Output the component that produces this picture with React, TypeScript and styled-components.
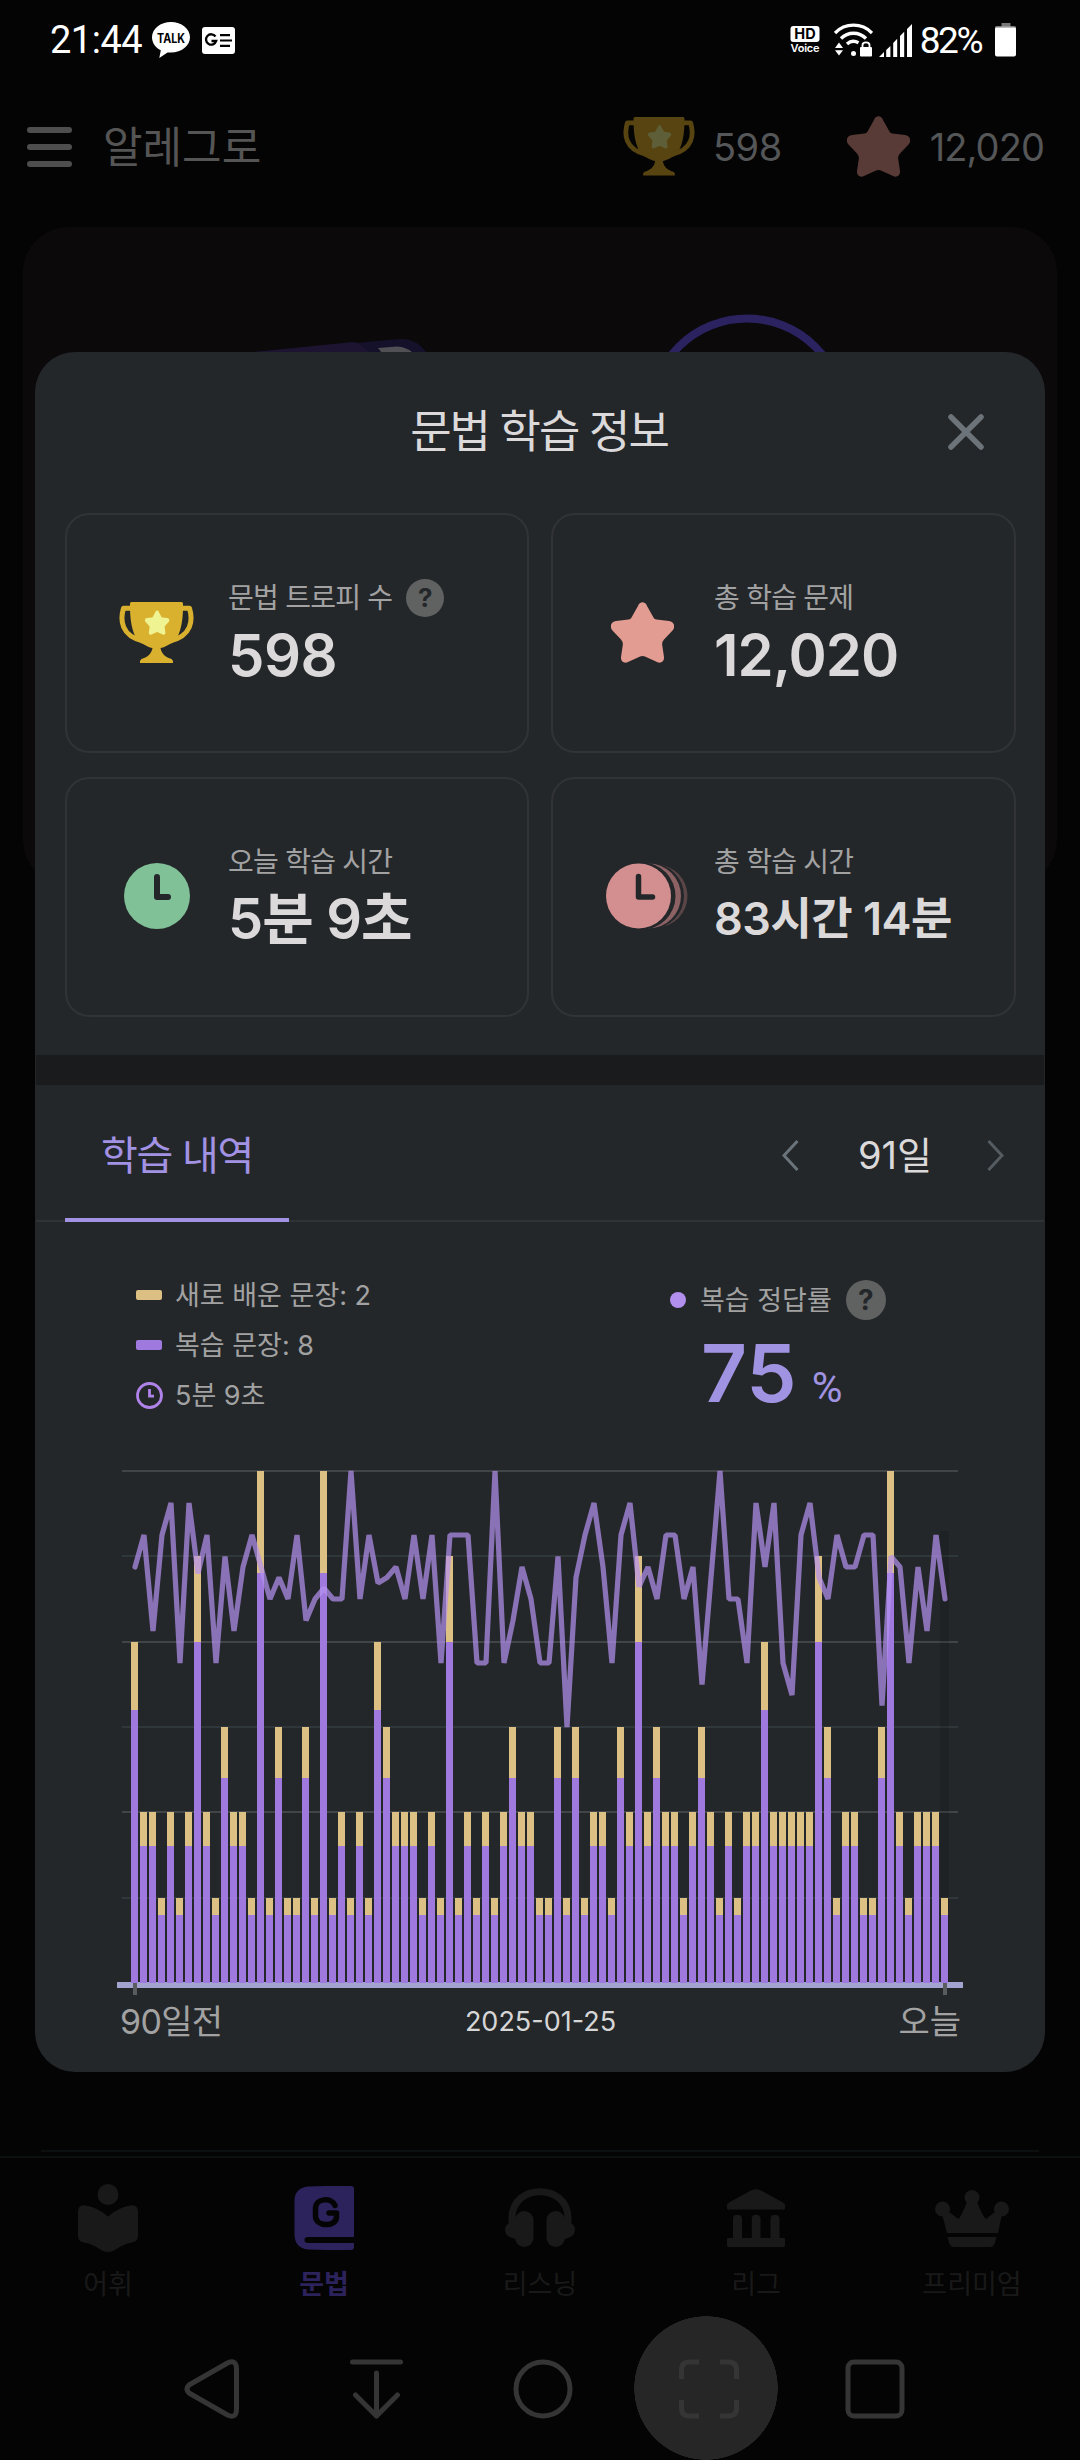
import React from 'react';
import styled, { createGlobalStyle } from 'styled-components';

const Global = createGlobalStyle`
  html, body { margin: 0; padding: 0; background: #040404; }
  * { box-sizing: border-box; }
  svg { display: block; flex: none; }
`;

const Screen = styled.div`
  position: relative;
  width: 1080px;
  height: 2460px;
  overflow: hidden;
  display: flex;
  flex-direction: column;
  background: #040404;
  font-family: Inter, 'Noto Sans CJK KR', sans-serif;
`;

/* A run of text; size, weight, colour and tracking vary between uses. */
const Label = styled.span<{ $size: number; $color: string; $weight?: number; $track?: number; $line?: number; $roboto?: boolean }>`
  font-size: ${p => p.$size}px;
  color: ${p => p.$color};
  font-weight: ${p => p.$weight ?? 400};
  letter-spacing: ${p => p.$track ?? 0}px;
  line-height: ${p => (p.$line ? `${p.$line}px` : 1)};
  white-space: nowrap;
  ${p => (p.$roboto ? "font-family: Roboto, 'Noto Sans CJK KR', sans-serif;" : '')}
`;

/* ---------- status bar ---------- */

const StatusBar = styled.div`
  height: 80px;
  padding: 0 64px 0 50px;
  display: flex;
  justify-content: space-between;
`;
const StatusGroup = styled.div`
  display: flex;
  align-items: center;
  height: 80px;
`;
const Spacer = styled.div<{ $w: number }>`
  width: ${p => p.$w}px;
  flex: none;
`;

const TalkIcon = () => (
  <svg width="38" height="36" viewBox="0 0 38 36">
    <path d="M19 0C8.5 0 0 6.8 0 15.3 0 21 3.6 25.700 8.800 28.300L7.300 36 15.500 30.400 19 30.600C29.500 30.600 38 23.800 38 15.300S29.500 0 19 0Z" fill="#fff" />
    <text x="19" y="20.500" fontSize="13" fontWeight="700" fontFamily="Inter" textAnchor="middle" textLength="28" lengthAdjust="spacingAndGlyphs" fill="#000">TALK</text>
  </svg>
);
const NewsIcon = () => (
  <svg width="33" height="27" viewBox="0 0 33 27">
    <rect width="33" height="27" rx="3" fill="#fff" />
    <path d="M13.500 9.500A5.200 5.200 0 1 0 14.200 14H9.500" fill="none" stroke="#000" strokeWidth="2.300" />
    <path d="M18 8.200H28M18 13.500H30M18 18.800H28" stroke="#000" strokeWidth="2.200" />
  </svg>
);
const HdVoiceIcon = () => (
  <svg width="30" height="28" viewBox="0 0 30 28">
    <rect x="0.500" y="0" width="29" height="16" rx="3" fill="#fff" />
    <text x="15" y="13.300" fontSize="14.500" fontWeight="700" fontFamily="Inter" textAnchor="middle" fill="#000">HD</text>
    <text x="15" y="26" fontSize="11" fontWeight="600" fontFamily="Inter" textAnchor="middle" textLength="29" fill="#fff">Voice</text>
  </svg>
);
const WifiIcon = () => (
  <svg width="39" height="34" viewBox="0 0 39 34" fill="none" stroke="#fff" strokeWidth="3.300">
    <path d="M1 10C11-0.500 28-0.500 38 10" />
    <path d="M7 15.500C14 8.500 25 8.500 32 15.500" />
    <path d="M13 21C16.500 17.700 20.500 17.500 24.500 19.700" />
    <circle cx="19.500" cy="30.500" r="2.500" fill="#fff" stroke="none" />
    <path d="M5 19.500L9 25H1ZM5 32.500L9 27.200H1Z" fill="#fff" stroke="none" />
    <rect x="26" y="24" width="12" height="9.500" rx="1" fill="#fff" stroke="none" />
    <path d="M28.500 25V22C28.500 18.500 35.500 18.500 35.500 22V25" strokeWidth="1.800" />
  </svg>
);
const SignalIcon = () => (
  <svg width="33" height="33" viewBox="0 0 33 33" fill="#fff">
    <path d="M0 33L5 28V33ZM7.200 26L11.400 22V33H7.200ZM14.200 19L18.200 14.800V33H14.200ZM21 12L25.200 7.800V33H21ZM28 5L33 0V33H28Z" />
  </svg>
);
const BatteryIcon = () => (
  <svg width="21" height="34" viewBox="0 0 21 34">
    <rect x="6.500" y="0" width="9" height="5" fill="#777" />
    <rect x="0" y="3.500" width="21" height="30" rx="2" fill="#fff" />
    <rect x="0" y="3.500" width="21" height="1" fill="#777" />
  </svg>
);

/* ---------- shared drawings ---------- */

const STAR =
  'M27 4C28.500-1 34.500-1 36 4L42.500 15.500Q43.300 17.300 45.500 17.600L58 19C63 19.500 65 25 61.500 28.500L53 37.500Q50.800 40 51.200 43L53 55C53.500 59.500 49.500 62 46 60L34.500 54.700Q31.500 53.300 28.500 54.700L17 60C13.500 62 9.500 59.500 10 55L11.800 43Q12.200 40 10 37.500L1.500 28.500C-2 25 0 19.500 5 19L17.500 17.600Q19.700 17.300 20.500 15.500Z';

const Star = ({ color, size = 63 }: { color: string; size?: number }) => (
  <svg width={size} height={(size * 61) / 63} viewBox="0 0 63 61">
    <path d={STAR} fill={color} />
  </svg>
);

const Trophy = ({ width, color, star }: { width: number; color: string; star: string }) => (
  <svg width={width} height={(width * 61) / 75} viewBox="0 0 75 61">
    <path d="M12.500 0H62.500Q64 0 64 1.500V5C64 22 60.500 36 53 41C47 44 45 45.500 41.500 46C42.500 52 47 55.500 52.500 57Q54 58 54 59.500V61H21V59.500Q21 58 22.500 57C28 55.500 32.500 52 33.500 46C30 45.500 28 44 22 41C14.500 36 11 22 11 5V1.500Q11 0 12.500 0Z" fill={color} />
    <path d="M12 6.200H4.500C1 18 2 34 24 39M63 6.200H70.500C74 18 73 34 51 39" fill="none" stroke={color} strokeWidth="5" strokeLinejoin="round" />
    <path d={STAR} fill={star} transform="translate(26 8.500) scale(0.385 0.400)" />
  </svg>
);

/* ---------- page behind the dialog ---------- */

const AppBar = styled.div`
  height: 147px;
  padding: 0 36px 14px 27px;
  display: flex;
  align-items: center;
`;
const Grow = styled.div`
  flex: 1;
`;
const MenuIcon = () => (
  <svg width="45" height="40" viewBox="0 0 45 40" stroke="#4e4e4e" strokeWidth="6" strokeLinecap="round">
    <path d="M3 3H42M3 20H42M3 37H42" />
  </svg>
);
const Hero = styled.div`
  width: 1034px;
  height: 658px;
  margin-left: 23px;
  border-radius: 45px;
  background: #0b090a;
  overflow: hidden;
`;
const HeroArt = () => (
  <svg width="1034" height="300" viewBox="0 0 1034 300">
    <path d="M210 127L376 112Q396 111 405 129V160H210Z" fill="#15112a" />
    <path d="M210 127L330 115Q340 116 350 130H210Z" fill="#1c1430" />
    <path d="M355 121L374 119.500Q384 120 390 126H359Z" fill="#505055" />
    <circle cx="724" cy="188" r="96.500" fill="none" stroke="#2b2260" strokeWidth="8" />
  </svg>
);
const Rule = styled.div<{ $inset: number; $top: number }>`
  height: 2px;
  margin: ${p => p.$top}px ${p => p.$inset}px 0;
  background: #0d1011;
  flex: none;
`;
const TabBar = styled.div`
  height: 158px;
  display: flex;
  padding-top: 23px;
  flex: none;
`;
const TabItem = styled.div`
  width: 216px;
  display: flex;
  flex-direction: column;
  align-items: center;
  gap: 3px;
`;
const TabGlyph = styled.div`
  height: 74px;
  flex: none;
  display: flex;
  align-items: center;
  justify-content: center;
`;

const DIM = '#191919';
const ACTIVE = '#2c225c';

const ReaderIcon = () => (
  <svg width="60" height="68" viewBox="0 0 60 68" fill={DIM}>
    <circle cx="30" cy="10.500" r="10.500" />
    <path d="M0 28Q0 20 8 21.500Q20 23.500 30 32.500Q40 23.500 52 21.500Q60 20 60 28V52Q60 57.500 54 58.500Q45 60 37 66Q30 70 23 66Q15 60 6 58.500Q0 57.500 0 52Z" />
  </svg>
);
const GrammarIcon = () => (
  <svg width="60" height="64" viewBox="0 0 60 64">
    <path d="M14 0.500L32 0H57Q60 0 60 3V51H14Q10.500 51 10.500 54T14 57H60V61Q60 64 57 64H32L14 63.500Q1 62 0.500 49V14Q1 2 14 0.500Z" fill={ACTIVE} />
    <path d="M41 19.500C38 11.500 21.500 11.500 21.500 22.500V30C21.500 41 42 41.500 42.500 31V27H35" fill="none" stroke="#040404" strokeWidth="5.500" strokeLinecap="round" strokeLinejoin="round" />
  </svg>
);
const ListeningIcon = () => (
  <svg width="70" height="60" viewBox="0 0 70 60" fill={DIM}>
    <path d="M7 35V30C7 -5 63 -5 63 30V35" fill="none" stroke={DIM} strokeWidth="7" />
    <rect x="10" y="23" width="18.500" height="36" rx="9.200" />
    <rect x="41.500" y="23" width="18.500" height="36" rx="9.200" />
    <path d="M12 33C-4 33-4 50 12 51ZM58 33C74 33 74 50 58 51Z" />
  </svg>
);
const LeagueIcon = () => (
  <svg width="58" height="58" viewBox="0 0 58 58" fill={DIM}>
    <path d="M0 16Q0 14.500 2 13.500L24 1.500Q29-1 34 1.500L56 13.500Q58 14.500 58 16V19.500Q58 20.500 57 20.500H1Q0 20.500 0 19.500ZM6 29C6 24.500 15 24.500 15 29V49H24.800V29C24.800 24.500 33.500 24.500 33.500 29V49H43.500V29C43.500 24.500 52.500 24.500 52.500 29V49H56.500Q58 49 58 50.500V56.500Q58 58 56.500 58H1.500Q0 58 0 56.500V50.500Q0 49 1.500 49H6Z" />
  </svg>
);
const CrownIcon = () => (
  <svg width="74" height="57" viewBox="0 0 74 57" fill={DIM}>
    <circle cx="37" cy="7.500" r="7.500" />
    <circle cx="7.500" cy="19" r="7.500" />
    <circle cx="66.500" cy="19" r="7.500" />
    <path d="M7 24L14 22L23.500 29Q26 27 32 12H42Q48 27 51 29L60 22L67 24L63 43H12Z" />
    <path d="M12.500 47H61.500L60 52.500Q58.500 57 55 57H19Q15.500 57 14 52.500Z" />
  </svg>
);

const tabs: { name: string; icon: React.ReactNode; active?: boolean }[] = [
  { name: '어휘', icon: <ReaderIcon /> },
  { name: '문법', icon: <GrammarIcon />, active: true },
  { name: '리스닝', icon: <ListeningIcon /> },
  { name: '리그', icon: <LeagueIcon /> },
  { name: '프리미엄', icon: <CrownIcon /> },
];

const SystemNav = styled.div`
  height: 144px;
  padding-left: 128px;
  display: flex;
  align-items: center;
  flex: none;
`;
const NavKey = styled.div<{ $pressed?: boolean }>`
  width: 166px;
  height: 144px;
  padding-top: 2px;
  display: flex;
  align-items: center;
  justify-content: center;
  background: ${p => (p.$pressed ? 'radial-gradient(circle at 80px 72px, #262626 71.500px, transparent 72px)' : 'none')};
`;
const KeyGlyph = ({ children }: { children: React.ReactNode }) => (
  <svg width="60" height="60" viewBox="0 0 60 60" fill="none" stroke="#353535" strokeWidth="5" strokeLinecap="round" strokeLinejoin="round">
    {children}
  </svg>
);

/* ---------- dialog ---------- */

const Dialog = styled.div`
  position: absolute;
  left: 35px;
  top: 352px;
  width: 1010px;
  height: 1720px;
  border-radius: 40px;
  background: #24272a;
  display: flex;
  flex-direction: column;
  overflow: hidden;
`;
const DialogHead = styled.div`
  height: 161px;
  padding-bottom: 2px;
  display: grid;
  grid-template-columns: 128px 1fr 130px;
  align-items: center;
  justify-items: center;
`;
const Grid = styled.div`
  display: grid;
  grid-template-columns: 464px 465px;
  grid-auto-rows: 240px;
  gap: 24px 22px;
  padding-left: 30px;
`;
const Card = styled.div`
  border: 2px solid #313336;
  border-radius: 24px;
  display: flex;
  align-items: center;
`;
const CardIcon = styled.div<{ $lead?: number }>`
  width: 161px;
  padding-left: ${p => p.$lead ?? 18}px;
  padding-bottom: 2px;
  display: flex;
  justify-content: center;
`;
const CardText = styled.div`
  display: flex;
  flex-direction: column;
  gap: 6px;
`;
const Line = styled.div<{ $gap?: number; $h?: number }>`
  display: flex;
  align-items: center;
  gap: ${p => p.$gap ?? 0}px;
  height: ${p => p.$h ?? 38}px;
`;
const Help = styled.div<{ $d: number }>`
  width: ${p => p.$d}px;
  height: ${p => p.$d}px;
  border-radius: 50%;
  background: #606261;
  display: flex;
  align-items: center;
  justify-content: center;
  flex: none;
`;
const Band = styled.div`
  height: 30px;
  margin: 38px 1px 0;
  background: #1a1b1d;
  flex: none;
`;
const TabsRow = styled.div`
  height: 137px;
  margin: 0 1px;
  padding: 0 40px 0 29px;
  display: flex;
  justify-content: space-between;
  border-bottom: 2px solid #303235;
  flex: none;
`;
const Tab = styled.div`
  width: 224px;
  height: 137px;
  padding-top: 9px;
  display: flex;
  align-items: center;
  justify-content: center;
  border-bottom: 4px solid #a292e3;
`;
const Pager = styled.div`
  width: 222px;
  height: 140px;
  display: flex;
  align-items: center;
  justify-content: space-between;
`;
const PagerValue = styled.div`
  display: flex;
  padding-left: 4px;
`;
const Legend = styled.div`
  height: 226px;
  padding: 48px 0 0 101px;
  display: flex;
  flex: none;
`;
const LegendLeft = styled.div`
  width: 534px;
  display: flex;
  flex-direction: column;
`;
const LegendRight = styled.div`
  display: flex;
  flex-direction: column;
  padding-top: 10px;
`;
const Swatch = styled.div<{ $c: string }>`
  width: 26px;
  height: 10px;
  border-radius: 2px;
  background: ${p => p.$c};
`;
const Dot = styled.div`
  width: 16px;
  height: 16px;
  border-radius: 50%;
  background: #b28eed;
`;
const Score = styled.div`
  display: flex;
  align-items: baseline;
  gap: 15px;
  padding: 3px 0 0 31px;
`;
const AxisLabels = styled.div`
  display: grid;
  grid-template-columns: 1fr auto 1fr;
  align-items: center;
  height: 50px;
  padding: 0 84px 0 85px;

  & > :last-child {
    justify-self: end;
  }
`;

const BigClock = () => (
  <svg width="66" height="66" viewBox="0 0 66 66">
    <circle cx="33" cy="33" r="33" fill="#80c198" />
    <path d="M33 14V34H44" fill="none" stroke="#24272a" strokeWidth="6" strokeLinecap="round" strokeLinejoin="round" />
  </svg>
);
const StackedClock = () => (
  <svg width="82" height="66" viewBox="0 0 82 66">
    <circle cx="50" cy="33" r="31.500" fill="#5a4547" />
    <circle cx="45" cy="33" r="33" fill="#24272a" />
    <circle cx="42.500" cy="33" r="32.500" fill="#8c6265" />
    <circle cx="36" cy="33" r="33.500" fill="#24272a" />
    <ellipse cx="32.500" cy="33" rx="32.500" ry="32.500" fill="#d38f8f" />
    <path d="M32.500 13.500V34H46.500" fill="none" stroke="#24272a" strokeWidth="5.500" strokeLinecap="round" strokeLinejoin="round" />
  </svg>
);
const SmallClock = () => (
  <svg width="27" height="27" viewBox="0 0 27 27" fill="none" stroke="#b083ea" strokeWidth="2.800">
    <circle cx="13.500" cy="13.500" r="12" />
    <path d="M13.500 7V14.200H18" />
  </svg>
);

/* ---------- chart ---------- */

const bars = [
  4, 2, 2, 1, 2, 1, 2, 5, 2, 1, 3, 2, 2, 1, 6, 1, 3, 1, 1, 3, 1, 6, 1, 2, 1, 2, 1, 4, 3, 2, 2, 2, 1, 2, 1, 5, 1, 2, 1, 2,
  1, 2, 3, 2, 2, 1, 1, 3, 1, 3, 1, 2, 2, 1, 3, 2, 5, 2, 3, 2, 2, 1, 2, 3, 2, 1, 2, 1, 2, 2, 4, 2, 2, 2, 2, 2, 5, 3, 1, 2,
  2, 1, 1, 3, 6, 2, 1, 2, 2, 2, 1,
];
const accuracy = [
  81.25, 87.5, 68.75, 87.5, 93.75, 62.5, 93.75, 80, 87.5, 62.5, 83.3, 68.75, 81.25, 87.5, 81.25, 75, 79.2, 75, 87.5, 70.8,
  75, 77.1, 75, 75, 100, 75, 87.5, 78.1, 79.2, 81.25, 75, 87.5, 75, 87.5, 62.5, 87.5, 87.5, 87.5, 62.5, 62.5, 100, 62.5,
  70.8, 81.25, 75, 62.5, 62.5, 83.3, 50, 79.2, 87.5, 93.75, 81.25, 62.5, 87.5, 93.75, 77.4, 81.25, 75, 87.5, 87.5, 75,
  81.25, 58.3, 79.2, 100, 75, 75, 62.5, 93.75, 81.25, 93.75, 62.5, 56.25, 87.5, 93.75, 79.2, 75, 87.5, 81.25, 81.25, 87.5,
  87.5, 54.2, 83.3, 81.25, 62.5, 81.25, 68.75, 87.5, 75,
];

const TOP = 8;
const BASE = 520;
const levelY = (level: number) => Math.round(BASE - (level * (BASE - TOP)) / 6);
const percentY = (v: number) => TOP + ((100 - v) * (BASE - TOP)) / 100;

const ChartBox = styled.div`
  height: 534px;
  margin-top: 15px;
  padding-left: 82px;
  flex: none;
`;

const Chart = () => (
  <svg width="846" height="534" viewBox="0 0 846 534">
    {[6, 5, 4, 3, 2, 1].map(l => (
      <rect key={l} x="5" y={levelY(l) - 1} width="836" height="2" fill={l % 2 ? '#30373a' : '#424548'} />
    ))}
    <rect x="823" y="68" width="9" height="451" fill="#000" opacity="0.120" />
    <rect x="0" y="519" width="846" height="6" fill="#a2a3cf" />
    {bars.map((l, i) => {
      const x = 14 + i * 9;
      const top = levelY(l);
      const mid = levelY(l * 0.8);
      return (
        <g key={i}>
          <rect x={x} y={top} width="7" height={mid - top} fill="#ddc083" />
          <rect x={x} y={mid} width="7" height={BASE - mid} fill="#a079df" />
        </g>
      );
    })}
    <rect x="16" y="520" width="4" height="12" fill="#5a5b5d" />
    <rect x="826" y="520" width="4" height="12" fill="#5a5b5d" />
    <polyline
      points={accuracy.map((v, i) => `${18 + i * 9},${percentY(v).toFixed(1)}`).join(' ')}
      fill="none"
      stroke="#b591ef"
      strokeOpacity="0.710"
      strokeWidth="5.200"
      strokeLinecap="round"
      strokeLinejoin="bevel"
    />
  </svg>
);

const TEXT = '#dbd9da';
const MUTED = '#a2a2a2';

export default function App() {
  return (
    <>
      <Global />
      <Screen>
        <StatusBar>
          <StatusGroup>
            <Label $size={38} $color="#fff" $roboto $track={-0.5}>21:44</Label>
            <Spacer $w={10} />
            <TalkIcon />
            <Spacer $w={12} />
            <NewsIcon />
          </StatusGroup>
          <StatusGroup>
            <HdVoiceIcon />
            <Spacer $w={14} />
            <WifiIcon />
            <Spacer $w={6} />
            <SignalIcon />
            <Spacer $w={8} />
            <Label $size={37} $color="#fff" $roboto $track={-2.5}>82%</Label>
            <Spacer $w={14} />
            <BatteryIcon />
          </StatusGroup>
        </StatusBar>

        <AppBar>
          <MenuIcon />
          <Spacer $w={31} />
          <Label $size={43} $color="#555" $line={60}>알레그로</Label>
          <Grow />
          <Trophy width={72} color="#574411" star="#5e5f38" />
          <Spacer $w={18} />
          <Label $size={38} $color="#555657" $line={60} $track={-0.5}>598</Label>
          <Spacer $w={65} />
          <Star color="#583a36" />
          <Spacer $w={20} />
          <Label $size={38} $color="#555657" $line={60} $track={-0.9}>12,020</Label>
        </AppBar>
        <Hero>
          <HeroArt />
        </Hero>
        <Grow />
        <Rule $inset={41} $top={0} />
        <Rule $inset={0} $top={4} />
        <TabBar>
          {tabs.map(t => (
            <TabItem key={t.name}>
              <TabGlyph>{t.icon}</TabGlyph>
              <Label $size={27} $line={54} $color={t.active ? ACTIVE : DIM} $weight={t.active ? 700 : 400}>{t.name}</Label>
            </TabItem>
          ))}
        </TabBar>
        <SystemNav>
          <NavKey>
            <KeyGlyph><path d="M8 26L46.500 4Q55.500 0 55.500 10V50Q55.500 60 46.500 56L8 34Q4 30 8 26Z" /></KeyGlyph>
          </NavKey>
          <NavKey>
            <KeyGlyph><path d="M5.500 3H53.500M29.500 14V57M8.500 36L29.500 57L50.500 36" /></KeyGlyph>
          </NavKey>
          <NavKey>
            <KeyGlyph><circle cx="30" cy="30" r="27" /></KeyGlyph>
          </NavKey>
          <NavKey $pressed>
            <KeyGlyph><path strokeLinecap="butt" d="M2.500 20V11Q2.500 3 10.500 3H20M41 3H49.500Q57.500 3 57.500 11V20M57.500 41V49Q57.500 57 49.500 57H41M20 57H10.500Q2.500 57 2.500 49V41" /></KeyGlyph>
          </NavKey>
          <NavKey>
            <KeyGlyph><rect x="3" y="3" width="54" height="54" rx="6" /></KeyGlyph>
          </NavKey>
        </SystemNav>

        <Dialog>
          <DialogHead>
            <span />
            <Label $size={45} $color={TEXT} $line={60} $track={-2}>문법 학습 정보</Label>
            <Line $h={38}>
              <svg width="36" height="36" viewBox="0 0 36 36" stroke="#6c7479" strokeWidth="5.500" strokeLinecap="round">
                <path d="M3 3L33 33M33 3L3 33" />
              </svg>
              <Spacer $w={29} />
            </Line>
          </DialogHead>

          <Grid>
            <Card>
              <CardIcon><Trophy width={75} color="#dab12f" star="#eff391" /></CardIcon>
              <CardText>
                <Line $gap={14}>
                  <Label $size={28} $color={MUTED} $track={-0.75}>문법 트로피 수</Label>
                  <Help $d={38}><Label $size={26} $color="#24272a" $weight={700}>?</Label></Help>
                </Line>
                <Label $size={58} $line={64} $color={TEXT} $weight={600} $track={-0.6}>598</Label>
              </CardText>
            </Card>
            <Card>
              <CardIcon><Star color="#e29c91" /></CardIcon>
              <CardText>
                <Line><Label $size={28} $color={MUTED} $track={-0.75}>총 학습 문제</Label></Line>
                <Label $size={58} $line={64} $color={TEXT} $weight={600} $track={-1}>12,020</Label>
              </CardText>
            </Card>
            <Card>
              <CardIcon><BigClock /></CardIcon>
              <CardText>
                <Line><Label $size={28} $color={MUTED} $track={-0.75}>오늘 학습 시간</Label></Line>
                <Label $size={56} $line={64} $color={TEXT} $weight={600} $track={-0.9}>5분 9초</Label>
              </CardText>
            </Card>
            <Card>
              <CardIcon $lead={26}><StackedClock /></CardIcon>
              <CardText>
                <Line><Label $size={28} $color={MUTED} $track={-0.75}>총 학습 시간</Label></Line>
                <Label $size={45} $line={64} $color={TEXT} $weight={600} $track={-0.5}>83시간 14분</Label>
              </CardText>
            </Card>
          </Grid>

          <Band />

          <TabsRow>
            <Tab><Label $size={40} $line={60} $color="#a292e3" $track={-1.3}>학습 내역</Label></Tab>
            <Pager>
              <svg width="17" height="31" viewBox="0 0 17 31" fill="none" stroke="#69747b" strokeWidth="3"><path d="M15.500 1L2 15.500L15.500 30" /></svg>
              <PagerValue><Label $size={38} $line={60} $color={TEXT}>91일</Label></PagerValue>
              <svg width="17" height="31" viewBox="0 0 17 31" fill="none" stroke="#545c62" strokeWidth="3"><path d="M1.500 1L15 15.500L1.500 30" /></svg>
            </Pager>
          </TabsRow>

          <Legend>
            <LegendLeft>
              <Line $gap={13} $h={50}><Swatch $c="#dcc083" /><Label $size={27} $color={MUTED}>새로 배운 문장: 2</Label></Line>
              <Line $gap={13} $h={50}><Swatch $c="#a079df" /><Label $size={27} $color={MUTED}>복습 문장: 8</Label></Line>
              <Line $gap={12} $h={50}><SmallClock /><Label $size={27} $color={MUTED}>5분 9초</Label></Line>
            </LegendLeft>
            <LegendRight>
              <Line $gap={14} $h={40}><Dot /><Label $size={27} $color={MUTED}>복습 정답률</Label><Help $d={40}><Label $size={28} $color="#24272a" $weight={700}>?</Label></Help></Line>
              <Score>
                <Label $size={80} $line={100} $color="#a093e1" $weight={600}>75</Label>
                <Label $size={42} $color="#a093e1" $roboto>%</Label>
              </Score>
            </LegendRight>
          </Legend>

          <ChartBox><Chart /></ChartBox>
          <AxisLabels>
            <Label $size={34} $line={44} $color={MUTED} $track={-0.7}>90일전</Label>
            <Label $size={27} $line={34} $color="#d6d6d6">2025-01-25</Label>
            <Label $size={34} $line={44} $color={MUTED}>오늘</Label>
          </AxisLabels>
        </Dialog>
      </Screen>
    </>
  );
}
